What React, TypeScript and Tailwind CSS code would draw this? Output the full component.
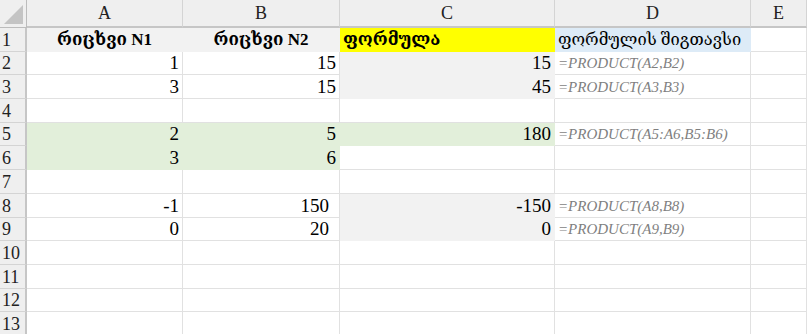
import React from "react";

type Cell = {
  t?: string;
  align?: "l" | "r" | "c" | "ri";
  bg?: string;
  kind?: "num" | "bold" | "geo" | "f";
};

const G = "#e2efda";
const Y = "#ffff00";
const B = "#ddebf7";
const S = "#f2f2f2";

const rows: Cell[][] = [
  [
    { t: "რიცხვი N1", align: "c", bg: S, kind: "bold" },
    { t: "რიცხვი N2", align: "c", bg: S, kind: "bold" },
    { t: "ფორმულა", align: "l", bg: Y, kind: "bold" },
    { t: "ფორმულის შიგთავსი", align: "l", bg: B, kind: "geo" },
    {},
  ],
  [
    { t: "1", align: "r", kind: "num" },
    { t: "15", align: "r", kind: "num" },
    { t: "15", align: "r", bg: S, kind: "num" },
    { t: "=PRODUCT(A2,B2)", align: "l", kind: "f" },
    {},
  ],
  [
    { t: "3", align: "r", kind: "num" },
    { t: "15", align: "r", kind: "num" },
    { t: "45", align: "r", bg: S, kind: "num" },
    { t: "=PRODUCT(A3,B3)", align: "l", kind: "f" },
    {},
  ],
  [{}, {}, {}, {}, {}],
  [
    { t: "2", align: "r", bg: G, kind: "num" },
    { t: "5", align: "r", bg: G, kind: "num" },
    { t: "180", align: "r", bg: G, kind: "num" },
    { t: "=PRODUCT(A5:A6,B5:B6)", align: "l", kind: "f" },
    {},
  ],
  [
    { t: "3", align: "r", bg: G, kind: "num" },
    { t: "6", align: "r", bg: G, kind: "num" },
    {},
    {},
    {},
  ],
  [{}, {}, {}, {}, {}],
  [
    { t: "-1", align: "r", kind: "num" },
    { t: "150", align: "ri", kind: "num" },
    { t: "-150", align: "r", bg: S, kind: "num" },
    { t: "=PRODUCT(A8,B8)", align: "l", kind: "f" },
    {},
  ],
  [
    { t: "0", align: "r", kind: "num" },
    { t: "20", align: "ri", kind: "num" },
    { t: "0", align: "r", bg: S, kind: "num" },
    { t: "=PRODUCT(A9,B9)", align: "l", kind: "f" },
    {},
  ],
  [{}, {}, {}, {}, {}],
  [{}, {}, {}, {}, {}],
  [{}, {}, {}, {}, {}],
  [{}, {}, {}, {}, {}],
];

const SERIF = "font-['Liberation_Serif','DejaVu_Serif',serif]";

function CellView({ c }: { c: Cell }) {
  const justify =
    c.align === "r"
      ? "justify-end pr-[3px]"
      : c.align === "ri"
      ? "justify-end pr-[10px]"
      : c.align === "c"
      ? "justify-center"
      : "justify-start pl-[3px]";
  let textCls = "text-[19px] text-black";
  if (c.kind === "bold") textCls = "text-[17px] font-bold text-black";
  if (c.kind === "geo") textCls = "text-[16.5px] text-black";
  if (c.kind === "f") textCls = "text-[15px] italic text-[#7f7f7f]";
  const bcol = c.bg ? c.bg : "#e1e1e1";
  return (
    <div
      className={`flex items-end h-[23.7px] border-r border-b overflow-visible whitespace-nowrap leading-[22px] ${justify} ${SERIF} ${textCls}`}
      style={{ backgroundColor: c.bg || "#ffffff", borderColor: bcol }}
    >
      {c.t}
    </div>
  );
}

export default function App() {
  const cols = ["A", "B", "C", "D", "E"];
  return (
    <div className="w-[807px] h-[334px] overflow-hidden bg-white">
      <div className="grid grid-cols-[27px_156px_157px_215px_196px_56px]">
        <div className="h-[28px] bg-[#efefef] border-r border-b border-[#bcbcbc] relative">
          <svg className="absolute right-[3px] bottom-[3px]" width="19" height="19" viewBox="0 0 19 19">
            <polygon points="19,0 19,19 0,19" fill="#c4c4c4" />
          </svg>
        </div>
        {cols.map((c) => (
          <div
            key={c}
            className={`h-[28px] bg-[#efefef] border-r border-r-[#d4d4d4] border-b-2 border-b-[#c6c6c6] flex items-center justify-center text-[18px] text-[#222] ${SERIF}`}
          >
            {c}
          </div>
        ))}
        {rows.map((r, i) => (
          <React.Fragment key={i}>
            <div
              className={`h-[23.7px] bg-[#efefef] border-b border-b-[#d4d4d4] border-r-2 border-r-[#c6c6c6] flex items-end pl-[2px] text-[18px] leading-[22px] text-[#222] ${SERIF}`}
            >
              {i + 1}
            </div>
            {r.map((c, j) => (
              <CellView key={j} c={c} />
            ))}
          </React.Fragment>
        ))}
      </div>
    </div>
  );
}
